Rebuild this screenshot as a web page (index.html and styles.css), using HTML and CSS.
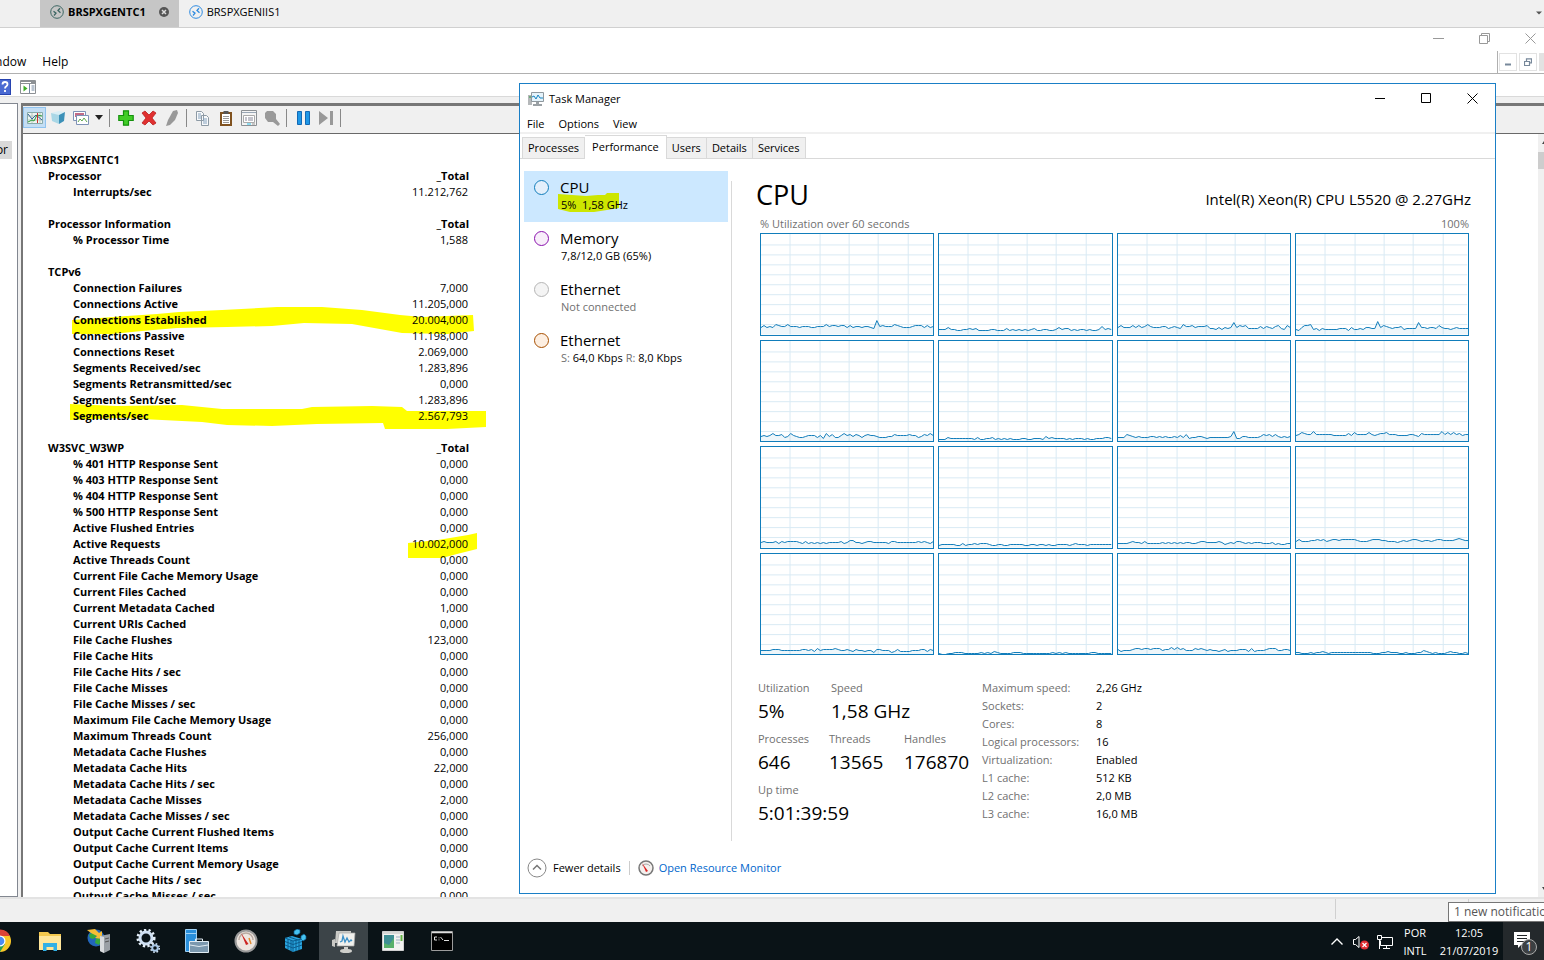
FILE: index.html
```html
<!DOCTYPE html>
<html lang="en">
<head>
<meta charset="utf-8">
<title>BRSPXGENTC1 - Remote session</title>
<link rel="stylesheet" href="styles.css">
</head>
<body>
<div class="screen">
  <nav class="sessions" aria-label="Sessions">
    <button class="session session-active">
      <svg class="session-icon" viewBox="0 0 14 14"><circle cx="7" cy="7" r="6.3" fill="none" stroke="#3d6663"/><path d="M3.5 6.2 6 8.2 4 10.5M10.5 7.7 8 5.5 10 3.3" fill="none" stroke="#3d6663" stroke-width="1.3"/></svg>
      <span>BRSPXGENTC1</span>
      <svg class="session-close" viewBox="0 0 10 10"><circle cx="5" cy="5" r="5" fill="#555"/><path d="m3 3 4 4M7 3 3 7" stroke="#ddd" stroke-width="1.5"/></svg>
    </button>
    <button class="session">
      <svg class="session-icon" viewBox="0 0 14 14"><circle cx="7" cy="7" r="6.3" fill="none" stroke="#2e8be0"/><path d="M3.5 6.2 6 8.2 4 10.5M10.5 7.7 8 5.5 10 3.3" fill="none" stroke="#2e8be0" stroke-width="1.3"/></svg>
      <span>BRSPXGENIIS1</span>
    </button>
    <svg class="sessions-more" viewBox="0 0 6 4"><path d="M0 .5h6L3 3.5z" fill="#555"/></svg>
  </nav>

  <div class="console">
    <div class="console-caption">
      <svg viewBox="0 0 11 11"><path d="M0 5.5h11" stroke="#999"/></svg>
      <svg viewBox="0 0 11 11"><path d="M.5 2.5h8v8h-8zM2.5 2.5v-2h8v8h-2" fill="none" stroke="#999"/></svg>
      <svg viewBox="0 0 11 11"><path d="m.5.5 10 10M10.500.5l-10 10" fill="none" stroke="#999"/></svg>
    </div>
    <div class="console-menu">
      <button class="menu-cut">Window</button>
      <button>Help</button>
      <div class="child-controls">
        <span><svg viewBox="0 0 8 8"><path d="M1 5.500h6v2H1z" fill="#77889a"/></svg></span>
        <span><svg viewBox="0 0 8 8"><path d="M.5 3.500h5v4h-5zM2.500 3V.8h5v4H6" fill="none" stroke="#77889a" stroke-width="1.2"/></svg></span>
        <span class="child-close"></span>
      </div>
    </div>
    <div class="console-tools">
      <svg class="help-icon" viewBox="0 0 16 16"><path d="M0 0h16v16H0z" fill="#2743b0"/><path d="M1 1h14v14H1z" fill="#4a6ad2"/><path d="M7.500 5.500Q7.500 3 10 3t2.500 2.200q0 1.300-1.200 2.100-1.300.8-1.300 2.200M10 11v2" fill="none" stroke="#fff" stroke-width="1.800"/></svg>
      <svg viewBox="0 0 16 14"><path d="M.5.5h15v13H.5z" fill="#fff" stroke="#8c9094"/><path d="M1 1h14v3H1z" fill="#8c9094"/><path d="M1 2.500h10" stroke="#fff"/><path d="M9.500 4v9M11.500 6h3M11.500 8h3M11.500 10h3" stroke="#7287a0"/><path d="m3.500 5.500 4 3-4 3z" fill="#3fae29"/></svg>
    </div>
    <div class="console-body">
      <aside class="tree"><span class="tree-item">Performance Monitor</span></aside>
      <section class="monitor">
        <div class="monitor-tools">
          <span class="tool tool-on"><svg viewBox="0 0 16 16"><path d="M.5 2.500h15v11H.5z" fill="#eef5f2" stroke="#8aa"/><path d="M5 3v10M13 3v10M1 6h14M1 10h14" stroke="#b7c9bd"/><path d="m1 4 4 5 4-4 6 5" fill="none" stroke="#345f9c"/><path d="m1 12 4-2 2 1 3-6 5 1" fill="none" stroke="#2a9c38"/><path d="M10.500 3v10" stroke="#c33"/></svg></span>
          <span class="tool"><svg viewBox="0 0 16 16"><path d="m1 3 8-2 6 1-6 3z" fill="#d9eef5"/><path d="m1 3 8 2v9l-7-3z" fill="#a9d7e6"/><path d="m9 5 6-3-1 9-5 3z" fill="#3d91b8"/></svg></span>
          <span class="tool"><svg viewBox="0 0 16 16"><path d="M.5 1.500h12v9H.5z" fill="#fff" stroke="#7f93b7"/><path d="M2 3h9v4H2z" fill="#c36b86"/><path d="M3.500 5.500h12v9h-12z" fill="#fff" stroke="#7f93b7"/><path d="m5 12 2-3 2 2 2-3 3 4" fill="none" stroke="#62a951"/></svg></span>
          <svg class="caret" viewBox="0 0 8 5"><path d="M0 0h8L4 5z" fill="#222"/></svg>
          <i class="sep"></i>
          <span class="tool"><svg viewBox="0 0 16 16"><path d="M5.500.8h5v4.700h4.700v5h-4.700v4.700h-5v-4.700H.8v-5h4.700z" fill="#41cc27" stroke="#14910d" stroke-width="1.200"/></svg></span>
          <span class="tool"><svg viewBox="0 0 16 16"><path d="m1 3 3-2 4 4 4-4 3 2-4 5 4 5-3 2-4-4-4 4-3-2 4-5z" fill="#e03030" stroke="#b92020" stroke-width=".8"/></svg></span>
          <span class="tool"><svg viewBox="0 0 16 16"><path d="m9 1 4-1 1 3-3 7-5 5-4 1 2-6z" fill="#999"/></svg></span>
          <i class="sep"></i>
          <span class="tool"><svg viewBox="0 0 16 16"><path d="M1.500 1.500h5l2 2v7h-7zM6.500 5.500h5l2 2v8h-7z" fill="#f7f9fb" stroke="#8d9aa5"/><path d="M3 4h3M3 6h3M3 8h3M8 9h4M8 11h4M8 13h4" stroke="#86a2bd"/></svg></span>
          <span class="tool"><svg viewBox="0 0 16 16"><path d="M2 2h12v14H2z" fill="#80521f"/><path d="M4 4h8v10H4z" fill="#fff"/><path d="M5.500 1h5v3h-5z" fill="#555"/><path d="M5 6.500h6M5 8.500h6M5 10.500h6M5 12.500h6" stroke="#999"/></svg></span>
          <span class="tool"><svg viewBox="0 0 16 16"><path d="M.5.5h15v15H.5z" fill="#f4f4f4" stroke="#8c9094"/><path d="M1 2.500h14" stroke="#9aa7b5"/><path d="M2.500 5.500h11v7h-11z" fill="#fff" stroke="#aaa"/><path d="M4 8h2M7 8h5M4 10h2M7 10h5" stroke="#889"/><path d="M6 14h4" stroke="#29bfe6"/><path d="M11 14h3" stroke="#999"/></svg></span>
          <span class="tool"><svg viewBox="0 0 16 16"><path d="M3 1h6l3 3v5l4 5-2 2-5-4H4L1 8V3z" fill="#999"/></svg></span>
          <i class="sep"></i>
          <span class="tool"><svg viewBox="0 0 16 16"><path d="M2.500 1.500h4v13h-4zM10.500 1.500h4v13h-4z" fill="#1e97e6" stroke="#1269b5"/></svg></span>
          <span class="tool"><svg viewBox="0 0 16 16"><path d="m1 1 9 7-9 7zM12 1h3v14h-3z" fill="#999"/></svg></span>
          <i class="sep"></i>
        </div>
        <div class="monitor-view">
          <div class="report">
            <svg class="marker" width="430" height="270" viewBox="0 0 430 270" fill="#ff0">
              <path d="M0 14 55 10 85 8 107 6 150 4 205 1 250 1 290 4 328 9 350 11 401 9 402 25 375 28 330 27 280 18 232 17 200 20 155 21 105 22 70 25 40 28 0 28z"/>
              <path d="M-2 98 45 100 110 99 150 103 230 103 240 101 300 100 330 101 335 105 414 105 414 121 375 123 313 123 311 117 245 118 200 120 155 119 130 116 90 114 50 112-2 114z"/>
              <path d="m336 237 30-3 30-5 9-2v16l-20 5-15 4h-34z"/>
            </svg>
            <table class="counters">
              <tbody>
              <tr class="host"><th colspan="2">\\BRSPXGENTC1</th></tr>
              <tr class="group"><th>Processor</th><td>_Total</td></tr>
              <tr><th>Interrupts/sec</th><td>11.212,762</td></tr>
              </tbody>
              <tbody>
              <tr class="group"><th>Processor Information</th><td>_Total</td></tr>
              <tr><th>% Processor Time</th><td>1,588</td></tr>
              </tbody>
              <tbody>
              <tr class="group"><th>TCPv6</th><td></td></tr>
              <tr><th>Connection Failures</th><td>7,000</td></tr>
              <tr><th>Connections Active</th><td>11.205,000</td></tr>
              <tr><th>Connections Established</th><td>20.004,000</td></tr>
              <tr><th>Connections Passive</th><td>11.198,000</td></tr>
              <tr><th>Connections Reset</th><td>2.069,000</td></tr>
              <tr><th>Segments Received/sec</th><td>1.283,896</td></tr>
              <tr><th>Segments Retransmitted/sec</th><td>0,000</td></tr>
              <tr><th>Segments Sent/sec</th><td>1.283,896</td></tr>
              <tr><th>Segments/sec</th><td>2.567,793</td></tr>
              </tbody>
              <tbody>
              <tr class="group"><th>W3SVC_W3WP</th><td>_Total</td></tr>
              <tr><th>% 401 HTTP Response Sent</th><td>0,000</td></tr>
              <tr><th>% 403 HTTP Response Sent</th><td>0,000</td></tr>
              <tr><th>% 404 HTTP Response Sent</th><td>0,000</td></tr>
              <tr><th>% 500 HTTP Response Sent</th><td>0,000</td></tr>
              <tr><th>Active Flushed Entries</th><td>0,000</td></tr>
              <tr><th>Active Requests</th><td>10.002,000</td></tr>
              <tr><th>Active Threads Count</th><td>0,000</td></tr>
              <tr><th>Current File Cache Memory Usage</th><td>0,000</td></tr>
              <tr><th>Current Files Cached</th><td>0,000</td></tr>
              <tr><th>Current Metadata Cached</th><td>1,000</td></tr>
              <tr><th>Current URIs Cached</th><td>0,000</td></tr>
              <tr><th>File Cache Flushes</th><td>123,000</td></tr>
              <tr><th>File Cache Hits</th><td>0,000</td></tr>
              <tr><th>File Cache Hits / sec</th><td>0,000</td></tr>
              <tr><th>File Cache Misses</th><td>0,000</td></tr>
              <tr><th>File Cache Misses / sec</th><td>0,000</td></tr>
              <tr><th>Maximum File Cache Memory Usage</th><td>0,000</td></tr>
              <tr><th>Maximum Threads Count</th><td>256,000</td></tr>
              <tr><th>Metadata Cache Flushes</th><td>0,000</td></tr>
              <tr><th>Metadata Cache Hits</th><td>22,000</td></tr>
              <tr><th>Metadata Cache Hits / sec</th><td>0,000</td></tr>
              <tr><th>Metadata Cache Misses</th><td>2,000</td></tr>
              <tr><th>Metadata Cache Misses / sec</th><td>0,000</td></tr>
              <tr><th>Output Cache Current Flushed Items</th><td>0,000</td></tr>
              <tr><th>Output Cache Current Items</th><td>0,000</td></tr>
              <tr><th>Output Cache Current Memory Usage</th><td>0,000</td></tr>
              <tr><th>Output Cache Hits / sec</th><td>0,000</td></tr>
              <tr><th>Output Cache Misses / sec</th><td>0,000</td></tr>
              </tbody>
            </table>
          </div>
          <div class="scroll">
            <svg viewBox="0 0 6 16"><path d="M4 10 6 7v3z" fill="#444"/></svg>
            <i class="thumb"></i>
            <svg viewBox="0 0 6 16"><path d="M4 6h2v3z" fill="#444"/></svg>
          </div>
        </div>
      </section>
    </div>
    <div class="console-status"><i></i><i></i></div>
  </div>

  <main class="taskmgr">
    <header class="tm-title">
      <svg class="tm-logo" viewBox="0 0 16 14"><path d="M0 3h4v10H0z" fill="#b5b8ba"/><path d="M1 5h2" stroke="#2c9c40"/><path d="M3.500.5h12v9h-12z" fill="#e5f3fb" stroke="#8f989e"/><path d="m4 5 2-1 2 3 2-4 2 3h3" fill="none" stroke="#1583c1"/><path d="M8 10h3v2h3v2H5v-2h3z" fill="#9ba1a5"/></svg>
      <h1>Task Manager</h1>
      <div class="tm-buttons">
        <button aria-label="Minimize"><svg viewBox="0 0 11 11"><path d="M0 5.500h10" stroke="#000"/></svg></button>
        <button aria-label="Maximize"><svg viewBox="0 0 11 11"><path d="M.5.5h9v9h-9z" fill="none" stroke="#000"/></svg></button>
        <button aria-label="Close"><svg viewBox="0 0 11 11"><path d="m.5.5 10 10M10.500.5l-10 10" stroke="#000"/></svg></button>
      </div>
    </header>
    <div class="tm-menu"><button>File</button><button>Options</button><button>View</button></div>
    <div class="tm-tabs" role="tablist">
      <button role="tab">Processes</button>
      <button role="tab" class="on" aria-selected="true">Performance</button>
      <button role="tab">Users</button>
      <button role="tab">Details</button>
      <button role="tab">Services</button>
    </div>
    <div class="tm-body">
      <nav class="resources">
        <button class="resource selected">
          <i class="dot dot-cpu"></i>
          <span class="r-name">CPU</span>
          <span class="r-info">
            <svg class="marker-small" width="62" height="19" viewBox="0 0 62 19" fill="#cde600"><path d="M0 1 14 2 28 3 40 2 47 2 49 0H61V15L49 17 36 19 12 19 0 16z"/></svg>
            <span class="r-text">5%&nbsp; 1,58 GHz</span>
          </span>
        </button>
        <button class="resource">
          <i class="dot dot-mem"></i>
          <span class="r-name">Memory</span>
          <span class="r-info">7,8/12,0 GB (65%)</span>
        </button>
        <button class="resource">
          <i class="dot dot-off"></i>
          <span class="r-name">Ethernet</span>
          <span class="r-info muted">Not connected</span>
        </button>
        <button class="resource">
          <i class="dot dot-net"></i>
          <span class="r-name">Ethernet</span>
          <span class="r-info"><span class="muted">S:</span> 64,0 Kbps <span class="muted">R:</span> 8,0 Kbps</span>
        </button>
      </nav>
      <section class="detail">
        <div class="d-head"><h2>CPU</h2><span>Intel(R) Xeon(R) CPU L5520 @ 2.27GHz</span></div>
        <div class="d-axis"><span>% Utilization over 60 seconds</span><span>100%</span></div>
        <div class="charts" id="charts"></div>
        <div class="d-stats">
          <div class="big">
            <dl><div class="w-util"><dt>Utilization</dt><dd>5%</dd></div><div><dt>Speed</dt><dd>1,58 GHz</dd></div></dl>
            <dl><div class="w-proc"><dt>Processes</dt><dd>646</dd></div><div class="w-thr"><dt>Threads</dt><dd>13565</dd></div><div><dt>Handles</dt><dd>176870</dd></div></dl>
            <dl><div><dt>Up time</dt><dd>5:01:39:59</dd></div></dl>
          </div>
          <table class="specs">
            <tr><th>Maximum speed:</th><td>2,26 GHz</td></tr>
            <tr><th>Sockets:</th><td>2</td></tr>
            <tr><th>Cores:</th><td>8</td></tr>
            <tr><th>Logical processors:</th><td>16</td></tr>
            <tr><th>Virtualization:</th><td>Enabled</td></tr>
            <tr><th>L1 cache:</th><td>512 KB</td></tr>
            <tr><th>L2 cache:</th><td>2,0 MB</td></tr>
            <tr><th>L3 cache:</th><td>16,0 MB</td></tr>
          </table>
        </div>
      </section>
    </div>
    <footer class="tm-foot">
      <button class="fewer"><svg viewBox="0 0 20 20"><circle cx="10" cy="10" r="9" fill="#fff" stroke="#888"/><path d="m6 11.500 4-4 4 4" fill="none" stroke="#777" stroke-width="1.500"/></svg><span>Fewer details</span></button>
      <i></i>
      <a href="#"><svg viewBox="0 0 16 16"><circle cx="8" cy="8" r="7" fill="#f4f0ee" stroke="#777" stroke-width="1.500"/><path d="M4 6a5 5 0 0 1 8 0" fill="none" stroke="#aaa"/><path d="m4 3 6 8-2 1z" fill="#d22"/></svg><span>Open Resource Monitor</span></a>
    </footer>
  </main>

  <div class="taskbar">
    <button class="task task-cut" aria-label="Chrome"><svg viewBox="0 0 24 24"><circle cx="12" cy="12" r="11" fill="#f9c828"/><path d="M1.500 8A11 11 0 0 1 22 7H12z" fill="#dc4437"/><path d="M1.500 8A11 11 0 0 0 12 23l5-8-5-3z" fill="#2aa053"/><circle cx="12" cy="12" r="5.500" fill="#fff"/><circle cx="12" cy="12" r="4.300" fill="#4b8bf4"/></svg></button>
    <button class="task" aria-label="File Explorer"><svg viewBox="0 0 24 24"><path d="M1 3h9l2 2h11v16H1z" fill="#f3c84e"/><path d="M2 7h21v14H1V7z" fill="#ffe69a"/><path d="M5 14h14v8h-3.500v-4h-7v4H5z" fill="#31b0e5"/></svg></button>
    <button class="task" aria-label="IIS Manager"><svg viewBox="0 0 24 24"><circle cx="9" cy="9" r="8.500" fill="#2266bb"/><path d="M2 6q4-4 8-1-1 4-4 5l-3-1zM9 9l6 1-3 6-4-2z" fill="#36a83c"/><path d="m0 1 8-1 4 4 3-2 0 8-7-1 2-2-6-3z" fill="#f6bd36"/><path d="m13 7 10-2v16l-6 3-4-2z" fill="#9aa0a5"/><path d="m13 7 4 1v16l-4-2z" fill="#d9dcde"/><path d="m18 10 4-1M18 13l4-1" stroke="#555"/></svg></button>
    <button class="task" aria-label="Services"><svg viewBox="0 0 24 24"><circle cx="10" cy="9" r="6" fill="none" stroke="#cfe0f3" stroke-width="3"/><circle cx="10" cy="9" r="8.300" fill="none" stroke="#e6f0fa" stroke-width="2.500" stroke-dasharray="2.300 2.300"/><circle cx="19" cy="19" r="2.800" fill="none" stroke="#a9c8e8" stroke-width="2"/><circle cx="19" cy="19" r="4.300" fill="none" stroke="#cfe0f3" stroke-width="1.500" stroke-dasharray="1.700 1.700"/></svg></button>
    <button class="task" aria-label="Server Manager"><svg viewBox="0 0 24 24"><path d="M.5.5h11v22H.5z" fill="#2a8fdb" stroke="#9fd1f5"/><path d="M1 4.500h10" stroke="#9fd1f5"/><path d="M4.500 12.500h19v11h-19z" fill="#7b98ae" stroke="#e0ebf2"/><path d="M10.500 12V10h7v2M5 16q9 3 18 0" fill="none" stroke="#e0ebf2"/></svg></button>
    <button class="task" aria-label="Resource Monitor"><svg viewBox="0 0 24 24"><circle cx="12" cy="12" r="10.500" fill="#eee6e0" stroke="#999" stroke-width="2"/><path d="M5 11a7 7 0 0 1 14 0" fill="none" stroke="#b9a9a0" stroke-width="1.500"/><path d="m7 4 7.500 11-2.500 1z" fill="#cc2320"/><path d="m15 9 2 6" stroke="#e08b35" stroke-width="1.500"/></svg></button>
    <button class="task" aria-label="Registry Editor"><svg viewBox="0 0 24 24"><path d="m2 9 7-2 10 3v10l-9 3-8-4z" fill="#29a5de"/><path d="m2 9 8 3v11M10 12l9-2M2 12.500l8 3 9-3M2 16l8 3 9-3M5 10v10M8 11v11M13 11v11M16 10v11M6 8l9 3" fill="none" stroke="#0c5d8e"/><path d="m11 2 3-2 3 1v3l-3 2-3-1zM18 7l3-2 2 2v3l-3 2-2-2z" fill="#45c2f1" stroke="#0c5d8e" stroke-width=".7"/></svg></button>
    <button class="task task-on" aria-label="Task Manager"><svg viewBox="0 0 24 24"><path d="m0 11 3-1v8l-3-1zM4 2h15v12H3z" fill="#c9c9c5"/><path d="M7 4h16l-1 13H5z" fill="#f0f0ec" stroke="#aaa" stroke-width=".7"/><path d="m8 13 2-1 1-5 2 6 2-4 2 4 2-2 1 1" fill="none" stroke="#3e91c8" stroke-width="1.300"/><path d="M12 18h4v2q4 0 4 2t-6 2-6-2 4-2z" fill="#cfcfcb"/></svg></button>
    <button class="task" aria-label="Server console"><svg viewBox="0 0 24 24"><path d="M1.500 2.500h21v19h-21z" fill="#f2f2f0" stroke="#d0d0d0"/><path d="M2 4h20" stroke="#bbb"/><path d="M3 6h10v13H3z" fill="#3f8f94"/><path d="m3 14 5 2 5-7v10H3z" fill="#58b06a"/><path d="M15 8h4M15 11h4M15 14h4" stroke="#9fb1c5"/><path d="M20.500 6v6" stroke="#62b244" stroke-width="2"/></svg></button>
    <button class="task" aria-label="Command Prompt"><svg viewBox="0 0 24 24"><path d="M1.500 2.500h21v19h-21z" fill="#000" stroke="#9c9c9c"/><path d="M2 3.500h20" stroke="#ddd" stroke-width="1.500"/><path d="M7 8H4.500v3H7M9 8.500v.8M9 10.500v.8M10.500 8l2.500 3M14 11.500h5" fill="none" stroke="#ddd"/></svg></button>
    <div class="tray">
      <svg class="t-icon" viewBox="0 0 16 16"><path d="m2.500 10.500 5.500-5.500 5.500 5.500" fill="none" stroke="#fff" stroke-width="1.400"/></svg>
      <svg class="t-icon" viewBox="0 0 16 16"><path d="M.5 5.500h2l3.500-3v11l-3.500-3h-2z" fill="none" stroke="#fff"/><circle cx="11.500" cy="11" r="4.500" fill="#e02e33"/><path d="m9.500 9 4 4M13.500 9l-4 4" stroke="#fff" stroke-width="1.200"/></svg>
      <svg class="t-icon" viewBox="0 0 16 16"><path d="M5 3.500h10.500v8H3.500V6.500M9.500 12v2M6 14.500h7M.5 1.500h4v4h-4zM2.500 6v9" fill="none" stroke="#fff"/></svg>
      <div class="t-lang"><span>POR</span><span>INTL</span></div>
      <div class="t-clock"><span>12:05</span><span>21/07/2019</span></div>
      <button class="t-notes" aria-label="Notifications"><svg viewBox="0 0 24 24"><path d="M1 1h16v13h-9l-3 3v-3H1z" fill="#fff"/><path d="M4 4.500h10M4 7.500h10M4 10.500h7" stroke="#222629"/><circle cx="16" cy="16" r="7.500" fill="#3c4043" stroke="#aaa"/><text x="16" y="20" text-anchor="middle" class="badge">1</text></svg></button>
    </div>
  </div>
  <div class="note">1 new notification</div>
</div>
<script src="charts.js"></script>
</body>
</html>
```
FILE: styles.css
```css
* { box-sizing: border-box; }
html, body { height: 100%; }
body { margin: 0; font: 11px/16px "Open Sans", "Noto Sans", sans-serif; color: #000; overflow: hidden; }
button { font: inherit; color: inherit; background: none; border: 0; padding: 0; margin: 0; text-align: left; }
h1, h2, dl, dd { margin: 0; font: inherit; }
i { display: block; }
svg { display: block; flex: none; }
table { border-collapse: collapse; border-spacing: 0; }
th, td { padding: 0; font-weight: inherit; text-align: left; white-space: nowrap; }
.screen { position: relative; height: 100vh; display: flex; flex-direction: column; overflow: hidden; background: #fff; }

.sessions { display: flex; height: 28px; padding-left: 40px; background: #f0f0f0; border-bottom: 1px solid #d0d0d0; flex: none; }
.session { display: flex; align-items: center; gap: 4px; padding: 0 10px 3px 10px; }
.session-active { background: #c6c6c6; font-weight: 700; }
.session-icon { width: 14px; height: 14px; }
.session-close { width: 10px; height: 10px; margin-left: 9px; }
.sessions-more { width: 6px; height: 4px; margin: 11px 2px 0 auto; }

.console { flex: 1; min-height: 0; display: flex; flex-direction: column; }
.console-caption { display: flex; justify-content: flex-end; gap: 35px; height: 23px; padding: 5px 8px 0 0; flex: none; }
.console-caption svg { width: 11px; height: 11px; }
.console-menu { display: flex; height: 23px; flex: none; align-items: center; border-bottom: 1px solid #b0b0b0; font-size: 12px; }
.console-menu button { margin-right: 16px; }
.console-menu .menu-cut { margin-left: -19px; }
.child-controls { display: flex; gap: 2px; margin-left: auto; height: 23px; padding: 2px 0 0 1px; border-left: 1px solid #b0b0b0; }
.child-controls span { display: flex; align-items: center; justify-content: center; width: 18px; height: 18px; border: 1px solid #e2e2e2; }
.child-controls svg { width: 8px; height: 8px; }
.child-controls .child-close { width: 5px; background: #e2e2e2; }
.console-tools { display: flex; gap: 9px; height: 23px; align-items: center; padding-top: 3px; flex: none; border-bottom: 1px solid #d9d9d9; }
.console-tools svg { width: 16px; height: 14px; }
.console-tools .help-icon { width: 16px; height: 16px; margin-left: -5px; }
.console-body { display: flex; flex: 1; min-height: 0; gap: 3px; padding-top: 6px; background: #f0f0f0; border-bottom: 2px solid #e3e3e3; }
.tree { display: flex; justify-content: flex-end; align-items: flex-start; width: 18px; padding: 37px 5px 0 0; background: #fff; border: 1px solid #828790; border-left: 0; overflow: hidden; font-size: 12px; }
.tree-item { white-space: nowrap; background: #d9d9d9; padding: 1px 4px; line-height: 16px; }
.monitor { flex: 1; min-width: 0; display: flex; flex-direction: column; border-top: 3px solid #777; border-left: 2px solid #777; }
.monitor-tools { display: flex; align-items: center; height: 28px; padding-bottom: 4px; flex: none; background: #f0f0f0; border-bottom: 1px solid #696969; }
.tool { display: flex; align-items: center; justify-content: center; width: 23px; height: 21px; }
.tool-on { background: #c4def4; border: 1px solid #90c3ef; }
.tool svg { width: 16px; height: 16px; }
.caret { width: 8px; height: 5px; margin: 0 3px; }
.sep { width: 1px; height: 18px; background: #888; margin: 0 4px 0 3px; }
.monitor-view { flex: 1; min-height: 0; display: flex; background: #fff; }
.report { position: relative; flex: 1; overflow: hidden; padding: 18px 0 0 10px; }
.marker { position: absolute; left: 49px; top: 172px; overflow: visible; }
.counters { position: relative; width: 436px; }
.counters tr { height: 16px; }
.counters th { padding-left: 40px; font-weight: 700; }
.counters .group th { padding-left: 15px; }
.counters .host th { padding-left: 0; }
.counters td { text-align: right; padding-right: 1px; }
.counters .group td { font-weight: 700; padding-right: 0; }
.counters tbody + tbody::before { content: ""; display: table-row; height: 16px; }
.scroll { width: 6px; display: flex; flex-direction: column; background: #f0f0f0; }
.scroll svg { width: 6px; height: 16px; }
.thumb { height: 17px; background: #cdcdcd; margin: 2px 0 auto; }
.console-status { display: flex; justify-content: flex-end; flex: none; height: 23px; background: #f0f0f0; }
.console-status i { border-left: 1px solid #d0d0d0; width: 133px; margin-bottom: 3px; }
.console-status i + i { width: 76px; }

.taskmgr { position: absolute; left: 519px; right: 48px; top: 83px; bottom: 66px; display: flex; flex-direction: column; background: #fff; border: 1px solid #1a7fc6; }
.tm-title { display: flex; align-items: center; height: 30px; padding-left: 8px; flex: none; }
.tm-logo { width: 16px; height: 14px; margin-right: 5px; }
.tm-buttons { display: flex; margin: 0 0 2px auto; }
.tm-buttons button { display: flex; justify-content: center; align-items: center; width: 46px; height: 28px; }
.tm-buttons svg { width: 11px; height: 11px; }
.tm-menu { display: flex; gap: 14px; height: 20px; padding: 2px 0 0 7px; flex: none; border-bottom: 2px solid #f0f0f0; }
.tm-tabs { display: flex; align-items: flex-end; height: 25px; padding-left: 2px; flex: none; border-bottom: 1px solid #d9d9d9; }
.tm-tabs button { height: 21px; padding: 0 5px; background: #f0f0f0; border: 1px solid #d9d9d9; border-bottom: 0; }
.tm-tabs button + button { border-left: 0; }
.tm-tabs button.on { height: 24px; margin-bottom: -1px; padding: 0 7px 2px; background: #fff; }
.tm-body { flex: 1; min-height: 0; display: flex; padding-top: 12px; }
.resources { display: flex; flex-direction: column; width: 208px; padding-left: 4px; flex: none; }
.resource { display: grid; grid-template-columns: 36px 1fr; grid-template-rows: 20px 16px; height: 51px; padding-top: 6px; align-content: start; align-items: center; }
.resource.selected { background: #cce8ff; }
.dot { width: 15px; height: 15px; margin-left: 10px; border-radius: 50%; border: 1px solid; }
.dot-cpu { color: #117dbb; background: #e3effb; }
.dot-mem { color: #8b12ae; background: #f8eefa; }
.dot-off { color: #b5b5b5; background: #f4f4f4; }
.dot-net { color: #a74f01; background: #fdefe2; }
.r-name { font-size: 15px; line-height: 20px; }
.r-info { position: relative; grid-column: 2; padding-left: 1px; }
.marker-small { position: absolute; left: -2px; top: -4px; }
.r-text { position: relative; }
.muted { color: #707070; }
.detail { flex: 1; min-width: 0; display: flex; flex-direction: column; margin-left: 3px; padding: 7px 24px 9px 25px; position: relative; }
.detail::before { content: ""; position: absolute; left: 0; top: 10px; bottom: 0; border-left: 1px solid #d9d9d9; }
.d-head { display: flex; justify-content: space-between; align-items: baseline; line-height: 34px; }
.d-head h2 { font-size: 27px; }
.d-head span { font-size: 15px; }
.d-axis { display: flex; justify-content: space-between; padding: 0 2px 0 4px; color: #707070; line-height: 16px; margin-bottom: 1px; }
.charts { flex: 1; min-height: 0; margin: 0 2px 0 4px; display: grid; grid-template: repeat(4, 1fr) / repeat(4, 1fr); gap: 4px; }
.chart { width: 100%; height: 100%; min-height: 0; border: 1px solid #117dbb; }
.chart .grid { stroke: #d9eaf4; fill: none; shape-rendering: crispEdges; vector-effect: non-scaling-stroke; }
.chart .area { fill: #117dbb; fill-opacity: .07; }
.chart .line { fill: none; stroke: #117dbb; vector-effect: non-scaling-stroke; }
.d-stats { display: flex; align-items: flex-start; margin: 24px 0 0 2px; }
.big { width: 224px; }
.big dl { display: flex; height: 51px; }
.big dt { color: #707070; line-height: 18px; }
.big dd { font-size: 19px; line-height: 28px; white-space: nowrap; }
.w-util { width: 73px; }
.w-proc { width: 71px; }
.w-thr { width: 75px; }
.specs th { width: 114px; color: #707070; }
.specs tr { height: 18px; }
.tm-foot { display: flex; align-items: center; height: 52px; padding: 2px 8px 0 7px; flex: none; }
.tm-foot svg { width: 20px; height: 20px; }
.tm-foot a svg { width: 16px; height: 16px; }
.fewer, .tm-foot a { display: flex; align-items: center; gap: 6px; }
.tm-foot a { gap: 5px; color: #0066cc; text-decoration: none; }
.tm-foot i { width: 1px; height: 14px; background: #ccc; margin: 0 8px; }

.taskbar { display: flex; height: 38px; flex: none; background: #0a1317; color: #fff; }
.task { display: flex; justify-content: center; align-items: center; width: 49px; }
.task svg { width: 24px; height: 24px; }
.task-cut { width: 25px; justify-content: flex-end; padding-right: 13px; }
.task-on { background: #3c4448; }
.tray { display: flex; align-items: center; margin-left: auto; padding-top: 2px; }
.t-icon { width: 16px; height: 16px; margin-right: 8px; }
.t-lang, .t-clock { display: flex; flex-direction: column; text-align: center; line-height: 18px; }
.t-lang { width: 28px; margin-right: 8px; }
.t-clock { width: 64px; margin-right: 2px; }
.t-notes { display: flex; align-items: center; justify-content: center; width: 41px; height: 38px; margin-top: -2px; padding: 4px 0 0 3px; background: #24292c; }
.t-notes svg { width: 24px; height: 24px; }
.badge { font-size: 12px; fill: #fff; }
.note { position: absolute; left: calc(100% - 96px); bottom: 38px; padding: 0 5px; background: #fff; border: 1px solid #767676; color: #555; white-space: nowrap; line-height: 18px; font-size: 12px; }
```
FILE: charts.js
```js
// One string per logical processor: load samples, one base-36 digit each.
const samples = [
  "79787a988a888788877888a899899797887887" + "6e89888a987778999797" + "8",
  "555755445565644445544464545454564455445756645455454458565",
  "797779797" + "8a8777886787" + "6a889788896657576" + "7c7989666686876896597",
  "54799a564655555666475565776" + "6d7987677856666c776776976656766" + "66",
  "56568667458654456664638574468675764676654445576666766457686",
  "22243333333324223342323232223322333253433332323332322333443",
  "444765454445545454454647344554344444445a3355444457675754545",
  "679877a7777776666686977779767889777666677658777777a797978677",
  "56555646566665464545454555564577554566555554665555555656546",
  "23333322423343444322332233333223323323223333234333233333333",
  "44445655464444454545454554456655556534546654545554445343344",
  "686667787867887888887666788877666567678876776788777789877",
  "44445554444444554536455556544543544344255444235333344455354",
  "100112221111121213211112221111111112121211111112211111",
  "53444566566566645575756444656545443453444555363444566644554",
  "22111212232122222222222222111223222112111224321211123221121"
];
const W = 172, H = 101;
document.getElementById("charts").innerHTML = samples.map(s => {
  const pts = [...s].map((c, i) => (i * W / (s.length - 1)).toFixed(1) + "," + (H - parseInt(c, 36))).join(" ");
  let grid = "";
  for (const x of [29, 59, 88, 117, 147]) grid += `M${x} 0V${H}`;
  for (let y = 11; y < H - 2; y += 10) grid += `M0 ${y}H${W - 1}`;
  return `<svg class="chart" viewBox="0 0 ${W} ${H}" preserveAspectRatio="none"><path class="grid" d="${grid}"/><polygon class="area" points="0,${H} ${pts} ${W},${H}"/><polyclass class="line"/><polyline class="line" points="${pts}"/></svg>`.replace('<polyclass class="line"/>', "");
}).join("");
```
